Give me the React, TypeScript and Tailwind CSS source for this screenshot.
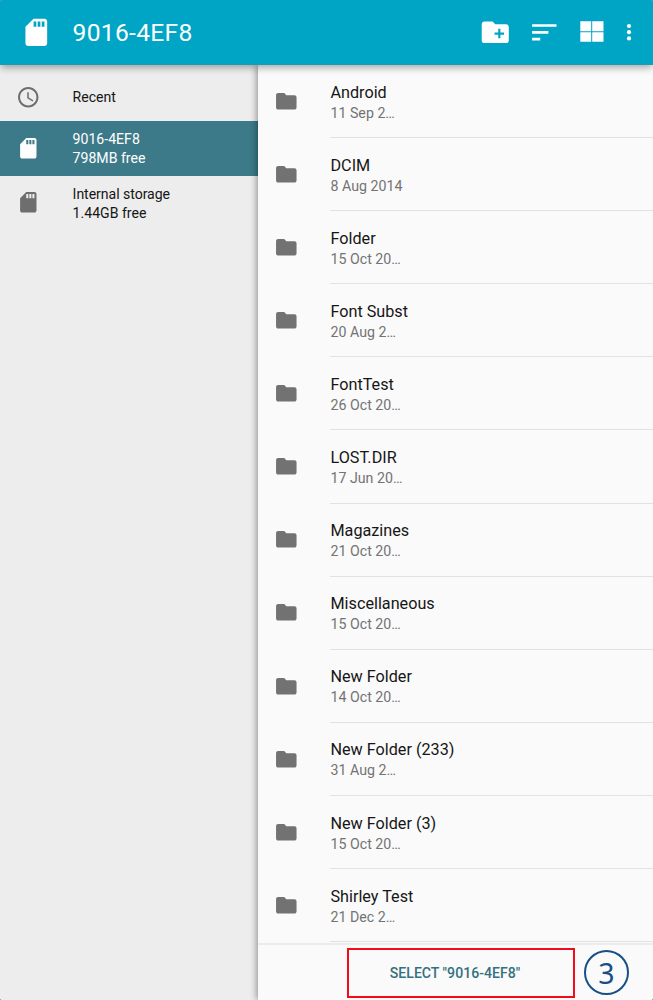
import React from "react";

const folders = [
  { name: "Android", date: "11 Sep 2…" },
  { name: "DCIM", date: "8 Aug 2014" },
  { name: "Folder", date: "15 Oct 20…" },
  { name: "Font Subst", date: "20 Aug 2…" },
  { name: "FontTest", date: "26 Oct 20…" },
  { name: "LOST.DIR", date: "17 Jun 20…" },
  { name: "Magazines", date: "21 Oct 20…" },
  { name: "Miscellaneous", date: "15 Oct 20…" },
  { name: "New Folder", date: "14 Oct 20…" },
  { name: "New Folder (233)", date: "31 Aug 2…" },
  { name: "New Folder (3)", date: "15 Oct 20…" },
  { name: "Shirley Test", date: "21 Dec 2…" },
];

function SdCard({ className }: { className: string }) {
  return (
    <svg viewBox="0 0 24 24" fill="currentColor" className={className}>
      <path d="M18 2h-8L4.02 8 4 20c0 1.1.9 2 2 2h12c1.1 0 2-.9 2-2V4c0-1.1-.9-2-2-2zm-6 6h-2V4h2v4zm3 0h-2V4h2v4zm3 0h-2V4h2v4z" />
    </svg>
  );
}

function Clock() {
  return (
    <svg viewBox="0 0 24 24" fill="currentColor" className="size-[24.5px] shrink-0 text-[#6e6e6e]">
      <path d="M11.99 2C6.47 2 2 6.48 2 12s4.47 10 9.99 10C17.52 22 22 17.52 22 12S17.52 2 11.99 2zM12 20c-4.42 0-8-3.58-8-8s3.58-8 8-8 8 3.58 8 8-3.58 8-8 8z" />
      <path d="M12.5 7H11v6l5.25 3.15.75-1.23-4.5-2.67z" />
    </svg>
  );
}

function FolderIcon() {
  return (
    <svg viewBox="0 0 24 24" fill="currentColor" className="mb-[1px] size-[24.6px] shrink-0 text-[#727272]">
      <path d="M10 4H4c-1.1 0-1.99.9-1.99 2L2 18c0 1.1.9 2 2 2h16c1.1 0 2-.9 2-2V8c0-1.1-.9-2-2-2h-8l-2-2z" />
    </svg>
  );
}

function Header() {
  return (
    <header className="relative z-20 flex h-[65px] shrink-0 items-start border-b border-[#1c9bb6] bg-[#00a5c5] pt-4 text-white shadow-[0_4px_7px_-1px_rgba(0,0,0,0.32)]">
      <SdCard className="ml-5 size-[32.6px] shrink-0" />
      <h1 className="ml-5 flex-1 text-[24.6px] leading-[34px] tracking-[0.3px]">9016-4EF8</h1>
      <svg viewBox="0 0 24 24" fill="currentColor" className="size-[32.5px]">
        <path fillRule="evenodd" d="M20 6h-8l-2-2H4c-1.11 0-1.99.89-1.99 2L2 18c0 1.11.89 2 2 2h16c1.11 0 2-.89 2-2V8c0-1.11-.89-2-2-2zm-1.5 7.8h-2.7v2.7h-1.6v-2.7h-2.7v-1.6h2.7V9.5h1.6v2.7h2.7v1.6z" />
      </svg>
      <svg viewBox="0 0 24 24" fill="currentColor" className="ml-4 size-[32.6px]">
        <path d="M3 18h6v-2H3v2zM3 6v2h18V6H3zm0 7h12v-2H3v2z" />
      </svg>
      <svg viewBox="0 0 24 22" fill="currentColor" className="ml-[19.5px] mt-[5px] h-[22px] w-6">
        <path d="M0.3 0.3h10.9v9.9H.3zM12.2.3h11.3v9.9H12.2zM.3 11.2h10.9v9.6H.3zM12.2 11.2h11.3v9.6H12.2z" />
      </svg>
      <svg viewBox="0 0 6 18" fill="currentColor" className="ml-[21.6px] mr-[21.4px] mt-[7px] h-[18px] w-1.5">
        <circle cx="3" cy="3" r="2.1" />
        <circle cx="3" cy="9.2" r="2.1" />
        <circle cx="3" cy="15.4" r="2.1" />
      </svg>
    </header>
  );
}

function Sidebar() {
  return (
    <nav className="w-[258px] shrink-0 bg-[#ededed] text-[14.1px] leading-[19px] text-[#161616]">
      <div className="flex h-14 items-center gap-8 pl-4 pt-2">
        <Clock />
        <span className="pt-px">Recent</span>
      </div>
      <div className="flex h-[54.5px] items-center gap-8 bg-[#3d7a89] pl-4 text-white">
        <SdCard className="size-[24.6px] shrink-0" />
        <div className="pt-[2px]">
          <div>9016-4EF8</div>
          <div>798MB free</div>
        </div>
      </div>
      <div className="flex h-[54.5px] items-center gap-8 pl-4">
        <SdCard className="size-[24.6px] shrink-0 text-[#6e6e6e]" />
        <div className="pt-[2px]">
          <div className="tracking-[-0.05px]">Internal storage</div>
          <div>1.44GB free</div>
        </div>
      </div>
    </nav>
  );
}

export default function App() {
  return (
    <div className="h-[1000px] w-[653px] bg-[#444]">
      <div className="flex h-full flex-col overflow-hidden rounded-[2px] bg-[#fafafa] font-['Roboto','Liberation_Sans',sans-serif]">
        <Header />
        <div className="flex min-h-0 flex-1">
          <Sidebar />
          <main className="relative z-10 flex min-w-0 flex-1 flex-col bg-[#fafafa] shadow-[-1px_0_7px_rgba(0,0,0,0.42)]">
            <ul>
              {folders.map((f) => (
                <li key={f.name} className="flex h-[73.1px] items-center pl-[15.6px]">
                  <FolderIcon />
                  <div className="ml-[32.3px] flex h-full flex-1 flex-col border-b border-[#e2e2e2] pt-[16.6px]">
                    <div className="text-[16.2px] leading-[21px] text-[#161616]">{f.name}</div>
                    <div className="text-[14.2px] leading-5 text-[#737373]">{f.date}</div>
                  </div>
                </li>
              ))}
            </ul>
            <footer className="mt-[1.3px] flex flex-1 items-start border-t-2 border-[#ececec] pl-[89px] pt-[3px]">
              <button className="h-[50px] w-[228px] border-2 border-[#f00c18] pr-3 text-[14.1px] font-medium text-[#34717f]">
                SELECT "9016-4EF8"
              </button>
              <span className="ml-[9px] mt-0.5 flex size-[45px] items-center justify-center rounded-full border-2 border-[#174f86] font-['Noto_Sans','Open_Sans',sans-serif] text-[28.5px] leading-none text-[#174f86]">
                3
              </span>
            </footer>
          </main>
        </div>
      </div>
    </div>
  );
}
